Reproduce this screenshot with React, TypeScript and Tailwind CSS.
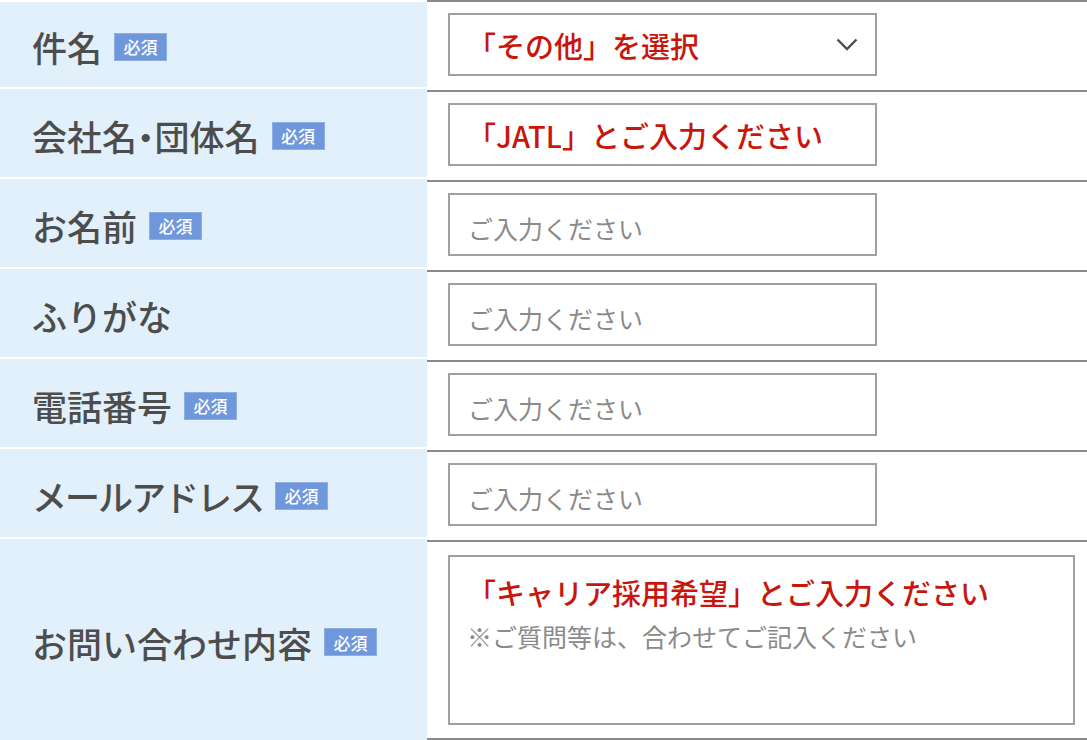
import React from 'react';

type Row = {
  label: React.ReactNode;
  key: string;
  required?: boolean;
  kind: 'select' | 'note' | 'input' | 'textarea';
  text?: string;
  tight?: boolean;
};

const palt = { fontFeatureSettings: '"palt"' };

const rows: Row[] = [
  { key: 'subject', label: '件名', required: true, kind: 'select', text: '「その他」を選択' },
  {
    key: 'company',
    label: (
      <>
        会社名<span style={palt}>・</span>団体名
      </>
    ),
    required: true,
    kind: 'note',
    text: '「JATL」とご入力ください',
  },
  { key: 'name', label: 'お名前', required: true, kind: 'input' },
  { key: 'kana', label: 'ふりがな', kind: 'input' },
  { key: 'tel', label: '電話番号', required: true, kind: 'input' },
  { key: 'mail', label: 'メールアドレス', required: true, kind: 'input', tight: true },
  { key: 'body', label: 'お問い合わせ内容', required: true, kind: 'textarea' },
];

const font = { fontFamily: '"Noto Sans CJK JP", "Noto Sans", sans-serif' };

function Badge() {
  return (
    <span className="ml-3 inline-flex h-[28px] w-[53px] items-center justify-center border border-[#8eaee6] bg-[#6f97dc] text-[17px] font-medium leading-none text-white">
      必須
    </span>
  );
}

function Field({ row }: { row: Row }) {
  if (row.kind === 'textarea') {
    return (
      <div className="mt-[13px] h-[170px] w-[627px] border-2 border-[#a0a0a0] pl-[17px] pt-[15px]">
        <p className="text-[29px] font-medium leading-[40px] text-[#c8160d]">「キャリア採用希望」とご入力ください</p>
        <p className="mt-[9px] text-[25px] leading-[30px] text-[#8a8a8a]">※ご質問等は、合わせてご記入ください</p>
      </div>
    );
  }
  return (
    <div className="mt-[11px] flex h-[63px] w-[429px] items-center border-2 border-[#a0a0a0] pl-[17px] pr-[17px]">
      {row.kind === 'input' ? (
        <span className="pl-px pt-[9px] text-[25px] text-[#8a8a8a]">ご入力ください</span>
      ) : (
        <span className="pt-[3px] text-[29px] font-medium text-[#c8160d]">{row.text}</span>
      )}
      {row.kind === 'select' && (
        <svg className="ml-auto" width="22" height="13" viewBox="0 0 22 13" fill="none">
          <path d="M1.5 1.5 11 11l9.5-9.5" stroke="#4d4d4d" strokeWidth="2.4" />
        </svg>
      )}
    </div>
  );
}

export default function App() {
  return (
    <div className="w-[1087px] h-[740px] overflow-hidden bg-white" style={font}>
      {rows.map((row, i) => {
        const last = i === rows.length - 1;
        return (
          <div key={row.key} className={`flex ${last ? 'h-[200px]' : 'h-[90px]'}`}>
            <div className={`flex w-[427px] flex-col bg-[#e1f0fa] ${last ? '' : 'pb-px'} ${i === 0 ? 'border-t-2 border-white' : ''}`}>
              <div className={`flex flex-1 items-center pl-8 ${last ? 'pt-1' : 'border-b-2 border-white pt-1'}`}>
                <span className={`text-[35px] font-medium leading-none text-[#4d4d4d] ${row.tight ? 'tracking-[-2px]' : ''}`}>
                  {row.label}
                </span>
                {row.required && <Badge />}
              </div>
            </div>
            <div className={`flex-1 border-t-2 border-[#8a8a8a] pl-[21px] ${last ? 'border-b-2' : ''}`}>
              <Field row={row} />
            </div>
          </div>
        );
      })}
    </div>
  );
}
